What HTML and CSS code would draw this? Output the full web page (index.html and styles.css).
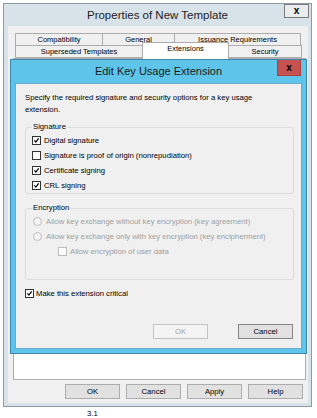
FILE: index.html
```html
<!DOCTYPE html>
<html lang="en">
  <head>
    <meta charset="UTF-8" />
    <meta name="viewport" content="width=device-width, initial-scale=1.0" />
    <title>Properties of New Template</title>
    <link rel="stylesheet" href="styles.css">
  </head>
  <body>
    <div class="window">
      <div class="titlebar">
        <span></span>
        <span class="title">Properties of New Template</span>
        <span class="close">x</span>
      </div>
      <div class="panel">
        <div class="tabs">
          <div class="tab-row">
            <span class="tab tab-compat">Compatibility</span>
            <span class="tab tab-general">General</span>
            <span class="tab tab-issuance">Issuance Requirements</span>
          </div>
          <div class="tab-row">
            <span class="tab tab-superseded">Superseded Templates</span>
            <span class="tab tab-extensions active">Extensions</span>
            <span class="tab tab-security">Security</span>
          </div>
        </div>
        <div class="sheet">
          <div class="dialog">
            <div class="dlg-titlebar">
              <span></span>
              <span class="dlg-title">Edit Key Usage Extension</span>
              <span class="dlg-close">x</span>
            </div>
            <div class="dlg-body">
              <p class="desc">Specify the required signature and security options for a key usage<br>extension.</p>
              <fieldset class="group">
                <legend>Signature</legend>
                <div class="row">
                  <span class="box"><svg viewBox="0 0 9 9"><path d="M1.8 4.4l1.9 2.2L7.3 1.8" /></svg></span>
                  <span>Digital signature</span>
                </div>
                <div class="row">
                  <span class="box"></span>
                  <span>Signature is proof of origin (nonrepudiation)</span>
                </div>
                <div class="row">
                  <span class="box"><svg viewBox="0 0 9 9"><path d="M1.8 4.4l1.9 2.2L7.3 1.8" /></svg></span>
                  <span>Certificate signing</span>
                </div>
                <div class="row">
                  <span class="box"><svg viewBox="0 0 9 9"><path d="M1.8 4.4l1.9 2.2L7.3 1.8" /></svg></span>
                  <span>CRL signing</span>
                </div>
              </fieldset>
              <fieldset class="group group-enc">
                <legend>Encryption</legend>
                <div class="row disabled">
                  <span class="radio"></span>
                  <span>Allow key exchange without key encryption (key agreement)</span>
                </div>
                <div class="row disabled">
                  <span class="radio"></span>
                  <span>Allow key exchange only with key encryption (key encipherment)</span>
                </div>
                <div class="row disabled nested">
                  <span class="box"></span>
                  <span>Allow encryption of user data</span>
                </div>
              </fieldset>
              <div class="row critical">
                <span class="box"><svg viewBox="0 0 9 9"><path d="M1.8 4.4l1.9 2.2L7.3 1.8" /></svg></span>
                <span>Make this extension critical</span>
              </div>
              <div class="dlg-buttons">
                <span class="btn btn-disabled">OK</span>
                <span class="btn btn-default">Cancel</span>
              </div>
            </div>
          </div>
        </div>
        <div class="buttons">
          <span class="btn">OK</span>
          <span class="btn">Cancel</span>
          <span class="btn">Apply</span>
          <span class="btn">Help</span>
        </div>
      </div>
    </div>
    <div class="caption">3.1</div>
  </body>
</html>
```

FILE: styles.css
```css
* {
  box-sizing: border-box;
}
body {
  margin: 0;
  background: #fff;
  color: #000;
  font-family: "Liberation Sans", Arial, sans-serif;
  font-size: 7.7px;
}

/* outer window */
.window {
  margin: 3px 0 0 3px;
  width: 309px;
  border: 1px solid #8d9ba5;
  background: #d8e2e9;
}
.titlebar {
  display: grid;
  grid-template-columns: 27px 1fr 27px;
  height: 22px;
}
.title {
  text-align: center;
  font-size: 11.5px;
  line-height: 22px;
  color: #1e1e1e;
}
.close {
  justify-self: end;
  margin-right: 2px;
  width: 25px;
  height: 14px;
  border: 1px solid #7b7b7b;
  background: #e9edf0;
  font-size: 10px;
  font-weight: bold;
  line-height: 11px;
  text-align: center;
}
.panel {
  margin: 0 3px 3px 4px;
  padding: 7px 2px 4px 5px;
  background: #f0f0f0;
}

/* tabs */
.tabs {
  padding-left: 2px;
}
.tab-row {
  display: flex;
  height: 13px;
}
.tab-row + .tab-row {
  margin-top: -1px;
}
.tab {
  height: 13px;
  border: 1px solid #adadad;
  background: #f0f0f0;
  text-align: center;
  font-size: 7.5px;
  line-height: 11px;
}
.tab + .tab {
  margin-left: -1px;
}
.tab-compat { width: 88px; }
.tab-general { width: 73px; }
.tab-issuance { width: 127px; }
.tab-superseded { width: 128px; }
.tab-extensions { width: 87px; }
.tab-security { width: 74px; }
.tab.active {
  position: relative;
  z-index: 1;
  height: 17px;
  margin-top: -3px;
  background: #fff;
  border-bottom: none;
}

.sheet {
  height: 322px;
  border: 1px solid #adadad;
  background: #fff;
}

/* edit dialog */
.dialog {
  display: flex;
  flex-direction: column;
  height: 295px;
  margin: 0 -2px 0 -4px;
  padding: 0 4px 4px;
  border: 1px solid #3d87ad;
  background: #5ec4ea;
}
.dlg-titlebar {
  display: grid;
  grid-template-columns: 30px 1fr 30px;
  height: 23px;
}
.dlg-title {
  text-align: center;
  font-size: 11px;
  line-height: 23px;
  color: #1b1b1b;
}
.dlg-close {
  justify-self: end;
  margin-right: 1px;
  width: 24px;
  height: 16px;
  border: 1px solid #a94040;
  border-top: none;
  background: #c75050;
  font-size: 10px;
  font-weight: bold;
  line-height: 15px;
  text-align: center;
}
.dlg-body {
  flex: 1;
  display: flex;
  flex-direction: column;
  padding: 8px 7px 9px 9px;
  border: 1px solid #6eaacb;
  background: #f0f0f0;
}
.desc {
  margin: 0;
  line-height: 12px;
}
.group {
  margin: 5px 0 0;
  padding: 0 0 0 6px;
  border: 1px solid #dcdcdc;
  border-radius: 3px;
}
.group legend {
  padding: 0 1px;
  line-height: 12px;
}
.group-enc {
  margin-top: 8px;
  padding-bottom: 20px;
}
.row {
  display: flex;
  align-items: center;
  gap: 3px;
  height: 15px;
}
.box {
  display: flex;
  width: 9px;
  height: 9px;
  border: 1px solid #333;
  background: #fff;
}
.box svg {
  width: 7px;
  height: 7px;
  fill: none;
  stroke: #000;
  stroke-width: 1.6;
}
.radio {
  width: 9px;
  height: 9px;
  margin-left: 1px;
  border: 1px solid #bcbcbc;
  border-radius: 50%;
  background: #f4f4f4;
}
.disabled {
  color: #a0a0a0;
  gap: 4px;
}
.disabled .box {
  border-color: #bcbcbc;
}
.nested {
  padding-left: 26px;
  gap: 3px;
}
.critical {
  margin-top: 6px;
  gap: 2px;
}
.dlg-buttons {
  display: flex;
  justify-content: flex-end;
  gap: 30px;
  margin-top: auto;
  margin-right: 1px;
}

/* buttons */
.btn {
  display: flex;
  align-items: center;
  justify-content: center;
  width: 55px;
  height: 15px;
  border: 1px solid #adadad;
  background: #e1e1e1;
}
.btn-disabled {
  border-color: #c4c4c4;
  background: #f4f4f4;
  color: #a3a3a3;
}
.btn-default {
  border-color: #858585;
}
.buttons {
  display: flex;
  justify-content: flex-end;
  gap: 6px;
  margin-top: 4px;
  padding-right: 3px;
}
.caption {
  margin: 2px 0 0 87px;
  line-height: 10px;
}
```
